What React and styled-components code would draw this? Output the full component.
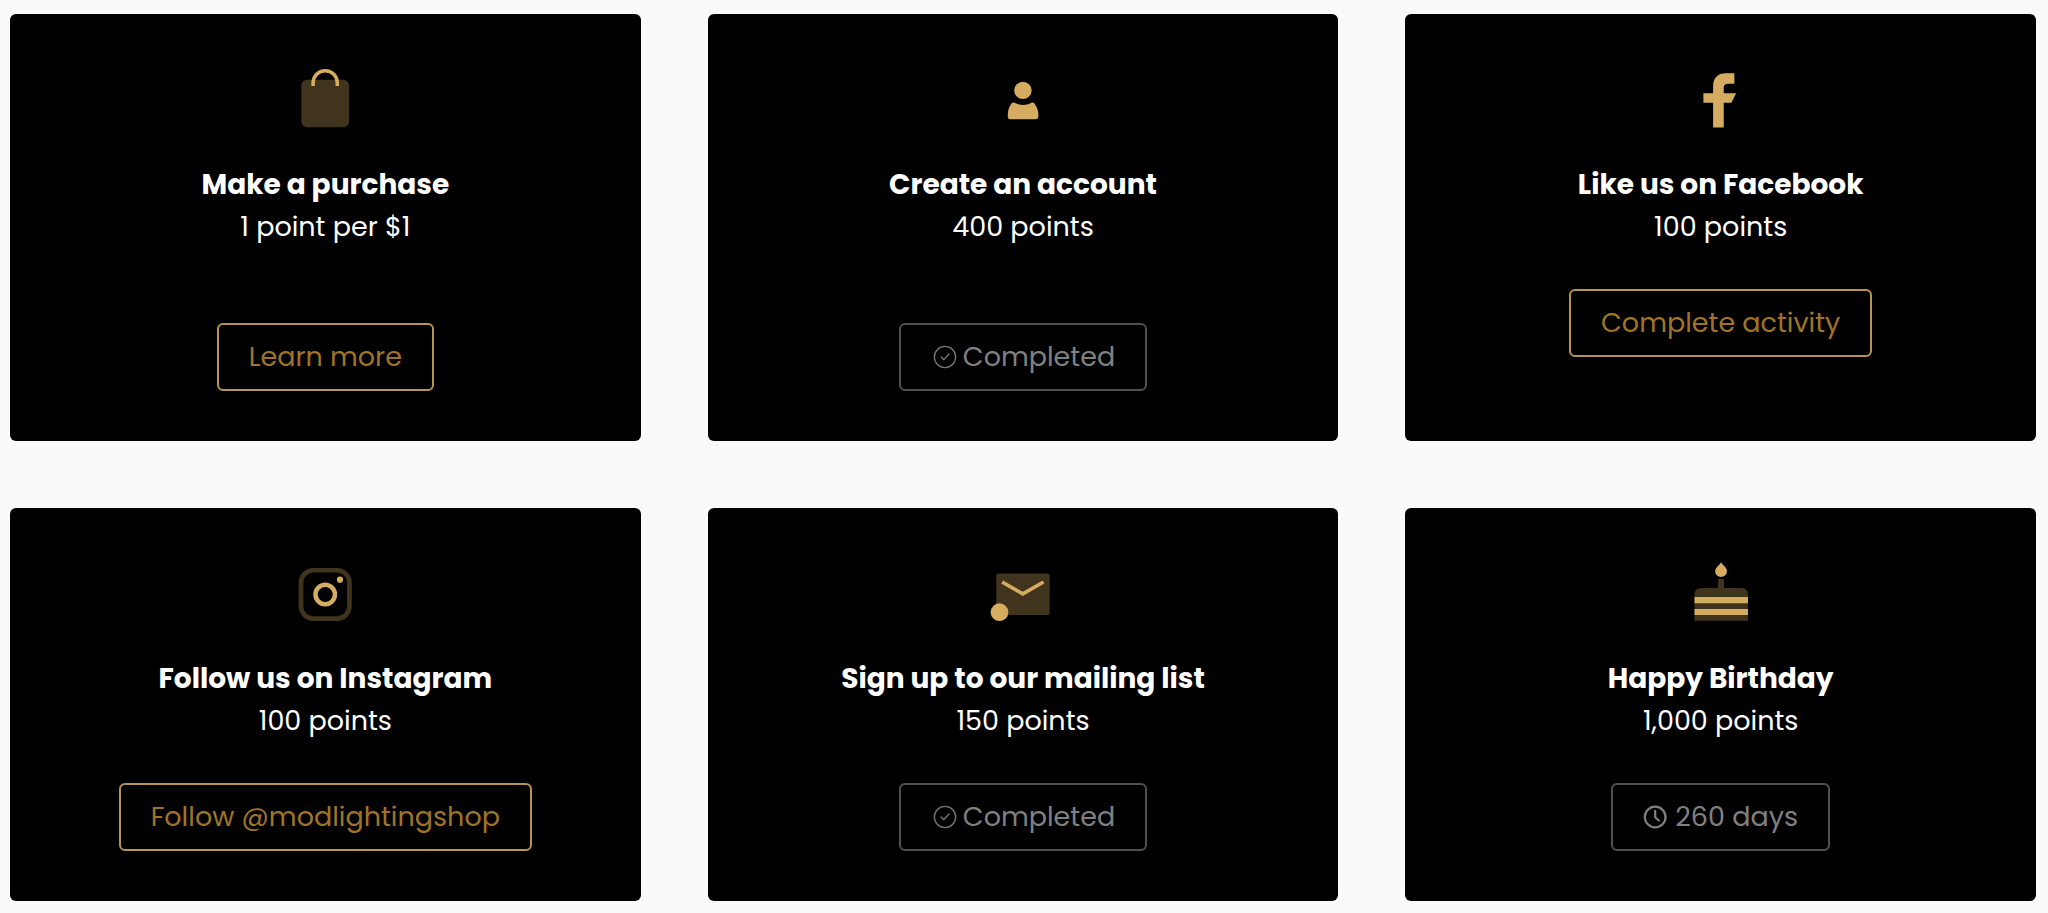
import styled, { createGlobalStyle } from "styled-components"

const GlobalStyle = createGlobalStyle`
  *,
  *::before,
  *::after {
    box-sizing: border-box;
  }

  body {
    margin: 0;
    background: #fafafa;
    font-family: "Poppins", "Inter", sans-serif;
  }
`

const ActivityGrid = styled.main`
  display: grid;
  grid-template-columns: repeat(3, 1fr);
  gap: 67px;
  padding: 14px 12px 12px 10px;
`

const Card = styled.section`
  display: flex;
  flex-direction: column;
  align-items: center;
  padding: 54px 20px 50px;
  border-radius: 6px;
  background: #000;
  color: #fff;
  text-align: center;
`

const CardIcon = styled.svg`
  width: 59px;
  height: 59px;
  margin-bottom: 37px;
  overflow: visible;
  fill: #d6ad60;

  .muted {
    opacity: 0.3;
  }

  .line {
    fill: none;
    stroke: #d6ad60;
  }
`

const CardTitle = styled.h2`
  margin: 0;
  font-size: 28px;
  font-weight: 700;
  line-height: 42px;
`

const Points = styled.p`
  margin: 0 0 ${({ $spacious }) => ($spacious ? "75px" : "41px")};
  font-size: 27px;
  line-height: 42px;
`

const ActionButton = styled.button`
  display: inline-flex;
  align-items: center;
  gap: 4px;
  padding: 11px 30px;
  border: 2px solid #b89451;
  border-radius: 6px;
  background: transparent;
  color: #a07427;
  font-family: inherit;
  font-size: 27px;
  line-height: 42px;
  cursor: pointer;

  &:disabled {
    border-color: #505050;
    color: #808080;
    cursor: default;
  }
`

const StatusIcon = styled.svg`
  width: 28px;
  height: 28px;
  fill: none;
  stroke: ${({ $dim }) => ($dim ? "#757575" : "#808080")};
  stroke-width: ${({ $dim }) => ($dim ? 1 : 1.6)};
  stroke-linecap: round;
  stroke-linejoin: round;
`

const BagIcon = () => (
  <CardIcon viewBox="0 0 20 20" aria-hidden="true">
    <rect className="muted" x="1.8" y="4" width="16.2" height="16.1" rx="2" />
    <path className="line" strokeWidth="1.2" d="M5.8 6.1V5a4.1 4.1 0 0 1 8.2 0v1.1" />
  </CardIcon>
)

const UserIcon = () => (
  <CardIcon viewBox="0 0 20 20" aria-hidden="true">
    <circle cx="10.15" cy="7.6" r="2.95" />
    <path d="M6.4 11.9c.3-.3.6-.3.9-.1 1.8 1 3.9 1 5.7 0 .3-.2.7-.2.9.1 1 1.2 1.5 2.7 1.5 4.2 0 .9-.3 1.3-1.1 1.3H6c-.7 0-1-.4-1-1.3 0-1.5.4-3 1.4-4.2z" />
  </CardIcon>
)

const FacebookIcon = () => (
  <CardIcon viewBox="0 0 20 20" aria-hidden="true">
    <path d="M7.5 20.2v-8.4H4.2V8.6h3.3V6.2c0-2.8 1.5-4.4 4.3-4.4h2.9v3.5h-2c-1.1 0-1.6.4-1.6 1.5v1.8h4.2l-1.6 3.2h-2.6v8.4z" />
  </CardIcon>
)

const InstagramIcon = () => (
  <CardIcon viewBox="0 0 20 20" aria-hidden="true">
    <rect className="muted line" strokeWidth="1.6" x="1.7" y="2.8" width="16.4" height="16.4" rx="4.2" />
    <circle className="line" strokeWidth="1.5" cx="9.9" cy="11" r="3.3" />
    <circle cx="14.9" cy="6" r="1.05" />
  </CardIcon>
)

const MailIcon = () => (
  <CardIcon viewBox="0 0 20 20" aria-hidden="true">
    <rect className="muted" x="1.1" y="3.9" width="18.1" height="14.1" rx="0.8" />
    <path className="line" strokeWidth="1.2" d="M3.1 6.8l7 4 7-4" />
    <circle cx="2.2" cy="17" r="3" />
  </CardIcon>
)

const CakeIcon = () => (
  <CardIcon viewBox="0 0 20 20" aria-hidden="true">
    <path
      className="muted"
      d="M9.2 5.8h2v3h6a2.1 2.1 0 0 1 2.1 2.1v9H1.2v-9a2.1 2.1 0 0 1 2.1-2.1h5.9z"
    />
    <path d="M1.2 11.9h18.1V14H1.2zM1.2 15.9h18.1V18H1.2z" />
    <path d="M10.2 0c.2.9 2 1.7 2 3.1a2 2 0 0 1-4 0c0-1.4 1.8-2.2 2-3.1z" />
  </CardIcon>
)

const CheckIcon = () => (
  <StatusIcon $dim viewBox="0 0 20 20" aria-hidden="true">
    <circle cx="10" cy="10" r="7.6" />
    <path d="M7.3 10l1.8 1.9 3.8-4" />
  </StatusIcon>
)

const ClockIcon = () => (
  <StatusIcon viewBox="0 0 20 20" aria-hidden="true">
    <circle cx="8.7" cy="10" r="7.4" />
    <path d="M8.7 5.7v4.5l2.6 2.3" />
  </StatusIcon>
)

const activities = [
  {
    title: "Make a purchase",
    points: "1 point per $1",
    action: "Learn more",
    Icon: BagIcon,
    spacious: true,
  },
  {
    title: "Create an account",
    points: "400 points",
    action: "Completed",
    Icon: UserIcon,
    Status: CheckIcon,
    spacious: true,
  },
  {
    title: "Like us on Facebook",
    points: "100 points",
    action: "Complete activity",
    Icon: FacebookIcon,
  },
  {
    title: "Follow us on Instagram",
    points: "100 points",
    action: "Follow @modlightingshop",
    Icon: InstagramIcon,
  },
  {
    title: "Sign up to our mailing list",
    points: "150 points",
    action: "Completed",
    Icon: MailIcon,
    Status: CheckIcon,
  },
  {
    title: "Happy Birthday",
    points: "1,000 points",
    action: "260 days",
    Icon: CakeIcon,
    Status: ClockIcon,
  },
]

const App = () => {
  return (
    <>
      <GlobalStyle />
      <ActivityGrid>
        {activities.map(({ title, points, action, Icon, Status, spacious }) => (
          <Card key={title}>
            <Icon />
            <CardTitle>{title}</CardTitle>
            <Points $spacious={spacious}>{points}</Points>
            <ActionButton type="button" disabled={Boolean(Status)}>
              {Status && <Status />}
              {action}
            </ActionButton>
          </Card>
        ))}
      </ActivityGrid>
    </>
  )
}

export default App
